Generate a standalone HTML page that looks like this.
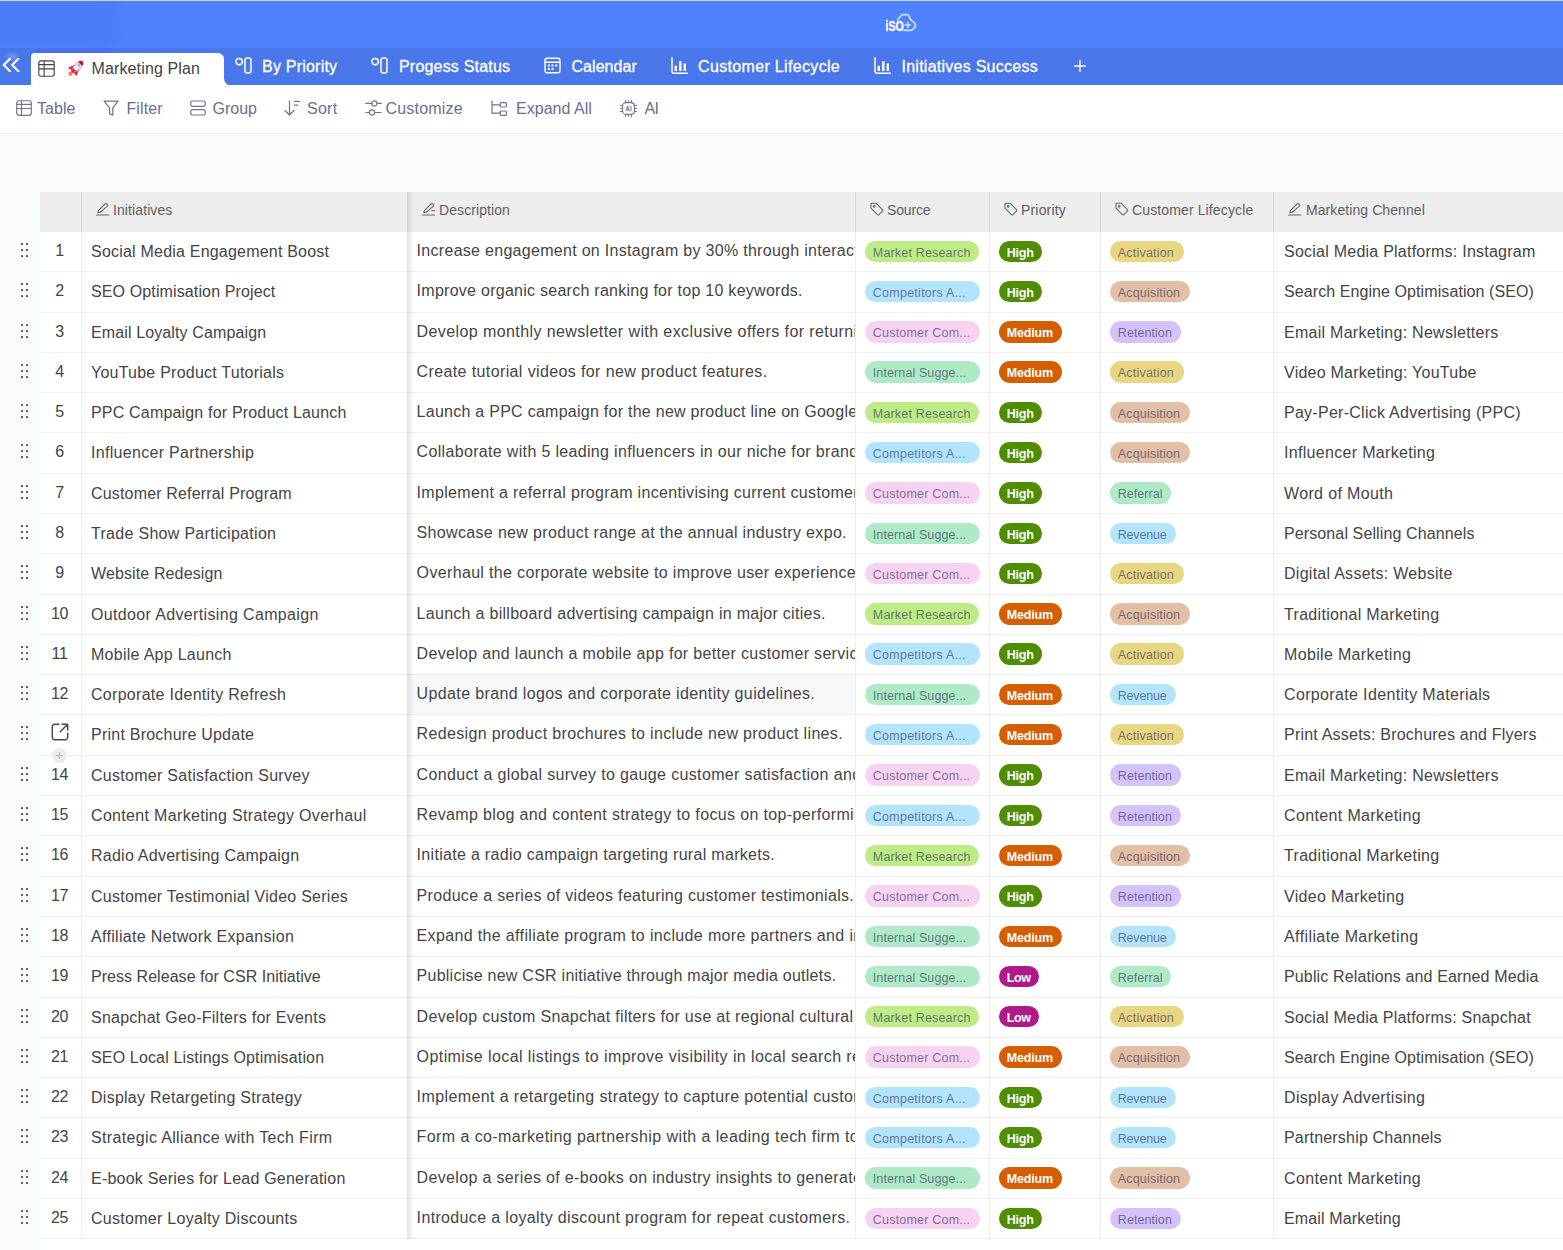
<!DOCTYPE html>
<html lang="en">
<head>
<meta charset="utf-8">
<title>Marketing Plan</title>
<style>
*{box-sizing:border-box;margin:0;padding:0}
html,body{width:1563px;height:1250px;overflow:hidden}
body{position:relative;background:#f9fafc;font-family:"Liberation Sans",sans-serif;font-size:16px;color:#444;-webkit-font-smoothing:antialiased}
svg{display:block;fill:none;stroke:currentColor;stroke-linecap:round;stroke-linejoin:round}
.abs{position:absolute}
/* top bar */
#top{position:absolute;left:0;top:0;width:1563px;height:48px;background:#4f82ff}
#topline{position:absolute;left:0;top:0;width:1563px;height:1px;background:#c9d3ea}
#tabs{position:absolute;left:0;top:48px;width:1563px;height:37.5px;background:#4a77e9}
#atab{position:absolute;left:31px;top:53px;width:193px;height:32.5px;background:#fff;border-radius:3.5px 6px 0 0}
#acurve{position:absolute;left:224px;top:77.5px;width:8px;height:8px;background:radial-gradient(circle at 100% 0,rgba(255,255,255,0) 7.5px,#fff 8.5px)}
.tabtxt{position:absolute;top:56px;height:22px;line-height:22px;color:#fff;font-size:16px;white-space:nowrap;-webkit-text-stroke:.3px #fff}
.tabico{position:absolute;top:57px;width:17px;height:17px;color:#fff}
/* toolbar */
#tool{position:absolute;left:0;top:85px;width:1563px;height:49px;background:#fff;border-bottom:1px solid #eceef2}
.tt{position:absolute;top:98px;height:22px;line-height:22px;color:#697090;font-size:16px;white-space:nowrap}
.ti{position:absolute;top:100.2px;width:16px;height:16px;color:#6d7492}
/* table */
#thead{position:absolute;left:40px;top:192px;width:1523px;height:40px;background:#ededed}
.h{position:absolute;top:0;height:40px;line-height:37px;font-size:14px;color:#606060;white-space:nowrap;border-left:1px solid #d9d9d9}
.h svg{position:absolute;top:10.2px;width:13.6px;height:13.6px;color:#666}
.h span{position:absolute;top:0}
.row{position:absolute;left:0;width:1563px;height:40.29px}
.c{position:absolute;top:0;height:40.29px;line-height:39px;background:#fff;white-space:nowrap;overflow:hidden;border-bottom:1px solid #efefef;border-left:1px solid #efefef}
.num{left:40px;width:41px;padding-right:2px;text-align:center;border-left:none;color:#444;letter-spacing:-.3px;line-height:37.4px}
.ini{left:81px;width:327px;padding-left:9px}
.desc{left:408px;width:448px;padding-left:8.6px;border-left:none;line-height:37.4px}
.desc.hov{background:#f7f8fa}
.src{left:855px;width:135px}
.pri{left:989px;width:112px}
.lc{left:1100px;width:174px}
.ch{left:1273px;width:290px;padding-left:10px}
.tag{position:absolute;left:9px;top:8.6px;height:21.4px;line-height:25.2px;border-radius:11px;font-weight:normal;font-size:12.5px;color:rgba(46,46,86,.64);text-align:left;padding-left:7.8px;white-space:nowrap;overflow:hidden}
.t-mr{background:#bdeb86}.t-ca{background:#b3e4fd}.t-cc{background:#f8d2f3}.t-is{background:#afeac6}
.p-high{background:#4f8d03;color:#fff;font-weight:bold}.p-medium{background:#d55e00;color:#fff;font-weight:bold}.p-low{background:#ae1a8a;color:#fff;font-weight:bold}
.l-activation{background:#e8d682}.l-acquisition{background:#e2bfa5}.l-retention{background:#d4c3fb}.l-referral{background:#afeac6}.l-revenue{background:#b3e4fd}
.grip{position:absolute;left:20.5px;top:11px;width:8px;height:15px}
.grip i{position:absolute;width:2px;height:2px;background:#555;border-radius:.5px}
.grip i:nth-child(1){left:0;top:0}.grip i:nth-child(2){left:5px;top:0}
.grip i:nth-child(3){left:0;top:6px}.grip i:nth-child(4){left:5px;top:6px}
.grip i:nth-child(5){left:0;top:12px}.grip i:nth-child(6){left:5px;top:12px}
.open{position:absolute;left:11.2px;top:8px;width:18px;height:18px;color:#4a4a4a;stroke-width:1.45}
#shadow{position:absolute;left:407px;top:192px;width:7px;height:1047.2px;background:linear-gradient(90deg,rgba(0,0,0,.11),rgba(0,0,0,0))}
#below{position:absolute;left:40px;top:1239.2px;width:1523px;height:11px;background:#fff}
#plus{position:absolute;left:52.1px;top:747.7px;width:15px;height:15px;border-radius:7.5px;background:#ebecf1}
#plus:before,#plus:after{content:"";position:absolute;background:#b6b7cd}
#plus:before{left:4px;top:6.9px;width:7px;height:1.2px}
#plus:after{left:6.9px;top:4px;width:1.2px;height:7px}
</style>
</head>
<body>
<div id="top"></div>
<div id="tabs"></div>
<div class="abs" style="left:-10px;top:-6px;width:134px;height:58px;border-radius:0 30px 30px 0;background:#4677f3;opacity:.38;filter:blur(5px)"></div>
<div class="abs" style="left:36px;top:49.5px;width:76px;height:2.5px;background:#4a50ee;opacity:.5;filter:blur(1.2px)"></div>
<div id="topline"></div>
<div id="atab"></div><div id="acurve"></div>

<!-- logo -->
<svg class="abs" style="left:885px;top:13px;width:32px;height:19px;color:#fff" viewBox="0 0 32 19">
<path d="M12.6 6.8 16 2.7c.5-.7 1.2-1 2-1h3.4c1.4 0 2.4.6 2.9 1.9l1 2.6c.3.7.8 1.2 1.5 1.5l1.6 1.2c1.3 1 2.1 2.1 2.1 3.7 0 1.2-.6 2.2-1.7 3l-1.4 1c-.7.5-1.4.7-2.3.7h-6.6" stroke-width="1.8" stroke-opacity=".72"/>
<path d="M22.8 8.8v6.4M19.6 12h6.4" stroke-width="1.5" stroke-linecap="butt" stroke-opacity=".8"/>
<text x=".6" y="17.7" style="font:bold 15.5px 'Liberation Sans',sans-serif" fill="#fff" stroke="#fff" stroke-width=".45" stroke-opacity=".9" textLength="18.2" lengthAdjust="spacingAndGlyphs">iSO</text>
</svg>

<!-- collapse chevrons -->
<div class="abs" style="left:7px;top:54px;width:10px;height:5px;border-radius:5px;background:#fff;opacity:.3;filter:blur(2px)"></div>
<svg class="abs" style="left:2px;top:57.6px;width:20px;height:14px;color:#fff;stroke-width:2.1" viewBox="0 0 20 14"><path d="M8 .8 1.7 7 8 13.2M16.4 .8 10.1 7l6.3 6.2"/></svg>

<!-- active tab -->
<svg class="abs" style="left:37.8px;top:60px;width:17px;height:17px;color:#454545;stroke-width:1.15" viewBox="0 0 17 17"><rect x=".8" y=".8" width="15.4" height="15.4" rx="2.1"/><path d="M.8 4.6h15.4M.8 8.8h15.4M6.1.8v15.4" stroke-linecap="butt"/></svg>
<svg class="abs" style="left:67.8px;top:60.3px;width:16px;height:16px;overflow:visible" viewBox="0 0 16 16" stroke="none"><g transform="translate(9.3 6.8) rotate(45)">
<circle cx="0" cy="9.7" r="2.1" fill="#f58a3c" stroke="none"/>
<path d="M-3.2.4-6 7.3-1.9 6.6 0 8.2 1.9 6.6 6 7.3 3.2.4z" fill="#e0244d" stroke="none"/>
<ellipse cx="0" cy="-.6" rx="3.3" ry="6.9" fill="#f0f1f3" stroke="#e8859d" stroke-width=".9"/>
<path d="M-2.9-4Q-2.1-6.6 0-7.8 2.1-6.6 2.9-4z" fill="#c8102e" stroke="none"/>
<circle cx="0" cy="-2.3" r="1.550" fill="#8fbfea" stroke="none"/>
<path d="M-2.2 3.2-.9 7.5.9 7.5 2.2 3.2Q0 4.6-2.2 3.2z" fill="#e0244d" stroke="none"/>
</g></svg>
<div class="abs" style="left:91.5px;top:58px;height:22px;line-height:22px;font-size:16px;color:#444;white-space:nowrap;letter-spacing:0.134px" id="mp">Marketing Plan</div>

<!-- other tabs -->
<svg class="tabico" style="left:234.5px" viewBox="0 0 17 17" stroke-width="1.5"><circle cx="4.2" cy="4.6" r="3.2"/><rect x="10" y="1" width="6" height="15" rx="2.2"/></svg>
<div class="tabtxt" style="left:262px;letter-spacing:0.218px" id="t1">By Priority</div>
<svg class="tabico" style="left:371px" viewBox="0 0 17 17" stroke-width="1.5"><circle cx="4.2" cy="4.6" r="3.2"/><rect x="10" y="1" width="6" height="15" rx="2.2"/></svg>
<div class="tabtxt" style="left:399px;letter-spacing:0.193px" id="t2">Progess Status</div>
<svg class="tabico" style="left:544px" viewBox="0 0 17 17" stroke-width="1.4"><rect x="1" y="1.2" width="15" height="14.6" rx="2.2"/><path d="M1 5.2h15"/><path d="M3.8 8.5h2M7.5 8.5h2M11.2 8.5h2M3.8 12h2M7.5 12h2" stroke-width="2.1" stroke-linecap="butt"/></svg>
<div class="tabtxt" style="left:571.5px;letter-spacing:0.045px" id="t3">Calendar</div>
<svg class="tabico" style="left:671px" viewBox="0 0 17 17" stroke-width="1.5"><path d="M1 .8v13.4a2 2 0 0 0 2 2h13.3"/><path d="M4.8 8.8v5.2M9.3 4.2v9.8M13.8 6.6v7.4" stroke-width="2.4" stroke-linecap="butt"/></svg>
<div class="tabtxt" style="left:698px;letter-spacing:0.336px" id="t4">Customer Lifecycle</div>
<svg class="tabico" style="left:874px" viewBox="0 0 17 17" stroke-width="1.5"><path d="M1 .8v13.4a2 2 0 0 0 2 2h13.3"/><path d="M4.8 8.8v5.2M9.3 4.2v9.8M13.8 6.6v7.4" stroke-width="2.4" stroke-linecap="butt"/></svg>
<div class="tabtxt" style="left:901.5px;letter-spacing:0.252px" id="t5">Initiatives Success</div>
<svg class="abs" style="left:1074px;top:60px;width:12px;height:12px;color:#fff;stroke-width:1.4" viewBox="0 0 12 12"><path d="M6 .5v11M.5 6h11"/></svg>

<!-- toolbar -->
<div id="tool"></div>
<svg class="ti" style="left:16px" viewBox="0 0 16 16" stroke-width="1.15"><rect x=".7" y=".7" width="14.6" height="14.6" rx="2.4"/><path d="M.7 4.4h14.6M.7 8.5h14.6M5.5 .7v14.6" stroke-linecap="butt"/></svg>
<div class="tt" style="left:37px;letter-spacing:0.03px" id="b1">Table</div>
<svg class="ti" style="left:103px" viewBox="0 0 16 16" stroke-width="1.2"><path d="M1 1.2h14l-5.2 6.6v7.4l-3.2-1.6V7.8z"/></svg>
<div class="tt" style="left:126.5px;letter-spacing:0.09px" id="b2">Filter</div>
<svg class="ti" style="left:189.5px" viewBox="0 0 16 16" stroke-width="1.2"><rect x=".8" y="1" width="14.4" height="5.4" rx="1.6"/><rect x=".8" y="9.6" width="14.4" height="5.4" rx="1.6"/></svg>
<div class="tt" style="left:212.5px" id="b3">Group</div>
<svg class="ti" style="left:284px" viewBox="0 0 16 16" stroke-width="1.2"><path d="M5.5 .8v14M1 10.5l4.5 4.5 4.5-4.5M10.5 1.4h5M10.5 5.2h3"/></svg>
<div class="tt" style="left:307px;letter-spacing:0.264px" id="b4">Sort</div>
<svg class="ti" style="left:364.5px;width:17px" viewBox="0 0 17 16" stroke-width="1.2"><path d="M.8 3.4h6M12 3.4h4.2M.8 12.5h3.6M9.6 12.5h6.6"/><circle cx="9.4" cy="3.4" r="2.6"/><circle cx="7" cy="12.5" r="2.6"/></svg>
<div class="tt" style="left:385.5px;letter-spacing:0.202px" id="b5">Customize</div>
<svg class="ti" style="left:490.5px" viewBox="0 0 16 16" stroke-width="1.2"><path d="M1 .8v12.4h8.2M1 4.8h8.2"/><rect x="9.2" y="2.7" width="6.2" height="4.3" rx=".9"/><rect x="9.2" y="11" width="6.2" height="4.3" rx=".9"/></svg>
<div class="tt" style="left:516px;letter-spacing:0.019px" id="b6">Expand All</div>
<svg class="ti" style="left:619.5px;width:17px;height:17px;top:99.5px" viewBox="0 0 17 17" stroke-width="1.1"><rect x="2.6" y="2.6" width="11.8" height="11.8" rx="3.4"/><path d="M5.5.5v2M8.5.5v2M11.5.5v2M5.5 14.5v2M8.5 14.5v2M11.5 14.5v2M.5 5.5h2M.5 8.5h2M.5 11.5h2M14.5 5.5h2M14.5 8.5h2M14.5 11.5h2" stroke-width="1"/><text x="8.5" y="10.9" style="font:bold 6.5px 'Liberation Sans',sans-serif" text-anchor="middle" fill="currentColor" stroke="none">AI</text></svg>
<div class="tt" style="left:644.5px;letter-spacing:-0.662px" id="b7">AI</div>

<!-- table header -->
<div id="thead">
<div class="h" style="left:0;width:41px;border-left:none"></div>
<div class="h" style="left:41px;width:327px"><svg style="left:14px" viewBox="0 0 14 14" stroke-width="1.1"><path d="M.6 13.4h12.8M2.2 9.2 9.4 2a1.2 1.2 0 0 1 1.7 0l.6.6a1.2 1.2 0 0 1 0 1.7L4.5 10.4l-2.6.4z"/></svg><span style="left:31px;letter-spacing:0.095px" id="h1">Initiatives</span></div>
<div class="h" style="left:368px;width:448px;border-left:none"><svg style="left:13.5px" viewBox="0 0 14 14" stroke-width="1.1"><path d="M.6 13.4h12.8M2.2 9.2 9.4 2a1.2 1.2 0 0 1 1.7 0l.6.6a1.2 1.2 0 0 1 0 1.7L4.5 10.4l-2.6.4zM10 9h3"/></svg><span style="left:31px;letter-spacing:0.088px" id="h2">Description</span></div>
<div class="h" style="left:815px;width:135px"><svg style="left:14px" viewBox="0 0 14 14" stroke-width="1.1"><path d="M1 1.8v4.6l6.6 6.6a1.2 1.2 0 0 0 1.7 0l3.5-3.5a1.2 1.2 0 0 0 0-1.7L6.2 1.2H1.6a.6.6 0 0 0-.6.6z"/><circle cx="4.3" cy="4.5" r=".9"/></svg><span style="left:31px;letter-spacing:-0.143px" id="h3">Source</span></div>
<div class="h" style="left:949px;width:112px"><svg style="left:14px" viewBox="0 0 14 14" stroke-width="1.1"><path d="M1 1.8v4.6l6.6 6.6a1.2 1.2 0 0 0 1.7 0l3.5-3.5a1.2 1.2 0 0 0 0-1.7L6.2 1.2H1.6a.6.6 0 0 0-.6.6z"/><circle cx="4.3" cy="4.5" r=".9"/></svg><span style="left:31px;letter-spacing:0.18px" id="h4">Priority</span></div>
<div class="h" style="left:1060px;width:174px"><svg style="left:14px" viewBox="0 0 14 14" stroke-width="1.1"><path d="M1 1.8v4.6l6.6 6.6a1.2 1.2 0 0 0 1.7 0l3.5-3.5a1.2 1.2 0 0 0 0-1.7L6.2 1.2H1.6a.6.6 0 0 0-.6.6z"/><circle cx="4.3" cy="4.5" r=".9"/></svg><span style="left:31px;letter-spacing:0.125px" id="h5">Customer Lifecycle</span></div>
<div class="h" style="left:1233px;width:290px"><svg style="left:14px" viewBox="0 0 14 14" stroke-width="1.1"><path d="M.6 13.4h12.8M2.2 9.2 9.4 2a1.2 1.2 0 0 1 1.7 0l.6.6a1.2 1.2 0 0 1 0 1.7L4.5 10.4l-2.6.4z"/></svg><span style="left:32px;letter-spacing:0.081px" id="h6">Marketing Chennel</span></div>
</div>
<div id="below"></div>

<div class="row" style="top:232.00px">
<div class="grip"><i></i><i></i><i></i><i></i><i></i><i></i></div>
<div class="c num">1</div>
<div class="c ini"><span id="i1" style="letter-spacing:0.209px">Social Media Engagement Boost</span></div>
<div class="c desc"><span id="d1" style="letter-spacing:0.293px">Increase engagement on Instagram by 30% through interactive content and stories.</span></div>
<div class="c src"><b class="tag t-mr" style="width:113.5px;letter-spacing:0.175px">Market Research</b></div>
<div class="c pri"><b class="tag p-high" style="width:43px;letter-spacing:-0.218px">High</b></div>
<div class="c lc"><b class="tag l-activation" style="width:74px;letter-spacing:0.201px">Activation</b></div>
<div class="c ch"><span id="c1" style="letter-spacing:0.238px">Social Media Platforms: Instagram</span></div>
</div>
<div class="row" style="top:272.29px">
<div class="grip"><i></i><i></i><i></i><i></i><i></i><i></i></div>
<div class="c num">2</div>
<div class="c ini"><span id="i2" style="letter-spacing:0.125px">SEO Optimisation Project</span></div>
<div class="c desc"><span id="d2" style="letter-spacing:0.266px">Improve organic search ranking for top 10 keywords.</span></div>
<div class="c src"><b class="tag t-ca" style="width:115px;letter-spacing:0.256px">Competitors A...</b></div>
<div class="c pri"><b class="tag p-high" style="width:43px;letter-spacing:-0.218px">High</b></div>
<div class="c lc"><b class="tag l-acquisition" style="width:80px;letter-spacing:0.177px">Acquisition</b></div>
<div class="c ch"><span id="c2" style="letter-spacing:0.084px">Search Engine Optimisation (SEO)</span></div>
</div>
<div class="row" style="top:312.58px">
<div class="grip"><i></i><i></i><i></i><i></i><i></i><i></i></div>
<div class="c num">3</div>
<div class="c ini"><span id="i3" style="letter-spacing:0.121px">Email Loyalty Campaign</span></div>
<div class="c desc"><span id="d3" style="letter-spacing:0.402px">Develop monthly newsletter with exclusive offers for returning customers.</span></div>
<div class="c src"><b class="tag t-cc" style="width:115px;letter-spacing:0.202px">Customer Com...</b></div>
<div class="c pri"><b class="tag p-medium" style="width:62.5px;letter-spacing:-0.187px">Medium</b></div>
<div class="c lc"><b class="tag l-retention" style="width:71px;letter-spacing:0.066px">Retention</b></div>
<div class="c ch"><span id="c3" style="letter-spacing:0.265px">Email Marketing: Newsletters</span></div>
</div>
<div class="row" style="top:352.87px">
<div class="grip"><i></i><i></i><i></i><i></i><i></i><i></i></div>
<div class="c num">4</div>
<div class="c ini"><span id="i4" style="letter-spacing:0.233px">YouTube Product Tutorials</span></div>
<div class="c desc"><span id="d4" style="letter-spacing:0.381px">Create tutorial videos for new product features.</span></div>
<div class="c src"><b class="tag t-is" style="width:115px;letter-spacing:0.104px">Internal Sugge...</b></div>
<div class="c pri"><b class="tag p-medium" style="width:62.5px;letter-spacing:-0.187px">Medium</b></div>
<div class="c lc"><b class="tag l-activation" style="width:74px;letter-spacing:0.201px">Activation</b></div>
<div class="c ch"><span id="c4" style="letter-spacing:0.245px">Video Marketing: YouTube</span></div>
</div>
<div class="row" style="top:393.16px">
<div class="grip"><i></i><i></i><i></i><i></i><i></i><i></i></div>
<div class="c num">5</div>
<div class="c ini"><span id="i5" style="letter-spacing:0.18px">PPC Campaign for Product Launch</span></div>
<div class="c desc"><span id="d5" style="letter-spacing:0.263px">Launch a PPC campaign for the new product line on Google Ads and Bing.</span></div>
<div class="c src"><b class="tag t-mr" style="width:113.5px;letter-spacing:0.175px">Market Research</b></div>
<div class="c pri"><b class="tag p-high" style="width:43px;letter-spacing:-0.218px">High</b></div>
<div class="c lc"><b class="tag l-acquisition" style="width:80px;letter-spacing:0.177px">Acquisition</b></div>
<div class="c ch"><span id="c5" style="letter-spacing:0.268px">Pay-Per-Click Advertising (PPC)</span></div>
</div>
<div class="row" style="top:433.45px">
<div class="grip"><i></i><i></i><i></i><i></i><i></i><i></i></div>
<div class="c num">6</div>
<div class="c ini"><span id="i6" style="letter-spacing:0.303px">Influencer Partnership</span></div>
<div class="c desc"><span id="d6" style="letter-spacing:0.331px">Collaborate with 5 leading influencers in our niche for brand promotion.</span></div>
<div class="c src"><b class="tag t-ca" style="width:115px;letter-spacing:0.256px">Competitors A...</b></div>
<div class="c pri"><b class="tag p-high" style="width:43px;letter-spacing:-0.218px">High</b></div>
<div class="c lc"><b class="tag l-acquisition" style="width:80px;letter-spacing:0.177px">Acquisition</b></div>
<div class="c ch"><span id="c6" style="letter-spacing:0.317px">Influencer Marketing</span></div>
</div>
<div class="row" style="top:473.74px">
<div class="grip"><i></i><i></i><i></i><i></i><i></i><i></i></div>
<div class="c num">7</div>
<div class="c ini"><span id="i7" style="letter-spacing:0.168px">Customer Referral Program</span></div>
<div class="c desc"><span id="d7" style="letter-spacing:0.323px">Implement a referral program incentivising current customers to refer.</span></div>
<div class="c src"><b class="tag t-cc" style="width:115px;letter-spacing:0.202px">Customer Com...</b></div>
<div class="c pri"><b class="tag p-high" style="width:43px;letter-spacing:-0.218px">High</b></div>
<div class="c lc"><b class="tag l-referral" style="width:61.4px;letter-spacing:0.03px">Referral</b></div>
<div class="c ch"><span id="c7" style="letter-spacing:0.351px">Word of Mouth</span></div>
</div>
<div class="row" style="top:514.03px">
<div class="grip"><i></i><i></i><i></i><i></i><i></i><i></i></div>
<div class="c num">8</div>
<div class="c ini"><span id="i8" style="letter-spacing:0.297px">Trade Show Participation</span></div>
<div class="c desc"><span id="d8" style="letter-spacing:0.336px">Showcase new product range at the annual industry expo.</span></div>
<div class="c src"><b class="tag t-is" style="width:115px;letter-spacing:0.104px">Internal Sugge...</b></div>
<div class="c pri"><b class="tag p-high" style="width:43px;letter-spacing:-0.218px">High</b></div>
<div class="c lc"><b class="tag l-revenue" style="width:66px;letter-spacing:-0.205px">Revenue</b></div>
<div class="c ch"><span id="c8" style="letter-spacing:0.113px">Personal Selling Channels</span></div>
</div>
<div class="row" style="top:554.32px">
<div class="grip"><i></i><i></i><i></i><i></i><i></i><i></i></div>
<div class="c num">9</div>
<div class="c ini"><span id="i9" style="letter-spacing:0.121px">Website Redesign</span></div>
<div class="c desc"><span id="d9" style="letter-spacing:0.344px">Overhaul the corporate website to improve user experience and speed.</span></div>
<div class="c src"><b class="tag t-cc" style="width:115px;letter-spacing:0.202px">Customer Com...</b></div>
<div class="c pri"><b class="tag p-high" style="width:43px;letter-spacing:-0.218px">High</b></div>
<div class="c lc"><b class="tag l-activation" style="width:74px;letter-spacing:0.201px">Activation</b></div>
<div class="c ch"><span id="c9" style="letter-spacing:0.268px">Digital Assets: Website</span></div>
</div>
<div class="row" style="top:594.61px">
<div class="grip"><i></i><i></i><i></i><i></i><i></i><i></i></div>
<div class="c num">10</div>
<div class="c ini"><span id="i10" style="letter-spacing:0.353px">Outdoor Advertising Campaign</span></div>
<div class="c desc"><span id="d10" style="letter-spacing:0.286px">Launch a billboard advertising campaign in major cities.</span></div>
<div class="c src"><b class="tag t-mr" style="width:113.5px;letter-spacing:0.175px">Market Research</b></div>
<div class="c pri"><b class="tag p-medium" style="width:62.5px;letter-spacing:-0.187px">Medium</b></div>
<div class="c lc"><b class="tag l-acquisition" style="width:80px;letter-spacing:0.177px">Acquisition</b></div>
<div class="c ch"><span id="c10" style="letter-spacing:0.318px">Traditional Marketing</span></div>
</div>
<div class="row" style="top:634.90px">
<div class="grip"><i></i><i></i><i></i><i></i><i></i><i></i></div>
<div class="c num">11</div>
<div class="c ini"><span id="i11" style="letter-spacing:0.276px">Mobile App Launch</span></div>
<div class="c desc"><span id="d11" style="letter-spacing:0.323px">Develop and launch a mobile app for better customer service.</span></div>
<div class="c src"><b class="tag t-ca" style="width:115px;letter-spacing:0.256px">Competitors A...</b></div>
<div class="c pri"><b class="tag p-high" style="width:43px;letter-spacing:-0.218px">High</b></div>
<div class="c lc"><b class="tag l-activation" style="width:74px;letter-spacing:0.201px">Activation</b></div>
<div class="c ch"><span id="c11" style="letter-spacing:0.336px">Mobile Marketing</span></div>
</div>
<div class="row" style="top:675.19px">
<div class="grip"><i></i><i></i><i></i><i></i><i></i><i></i></div>
<div class="c num">12</div>
<div class="c ini"><span id="i12" style="letter-spacing:0.294px">Corporate Identity Refresh</span></div>
<div class="c desc hov"><span id="d12" style="letter-spacing:0.371px">Update brand logos and corporate identity guidelines.</span></div>
<div class="c src"><b class="tag t-is" style="width:115px;letter-spacing:0.104px">Internal Sugge...</b></div>
<div class="c pri"><b class="tag p-medium" style="width:62.5px;letter-spacing:-0.187px">Medium</b></div>
<div class="c lc"><b class="tag l-revenue" style="width:66px;letter-spacing:-0.205px">Revenue</b></div>
<div class="c ch"><span id="c12" style="letter-spacing:0.352px">Corporate Identity Materials</span></div>
</div>
<div class="row" style="top:715.48px">
<div class="grip"><i></i><i></i><i></i><i></i><i></i><i></i></div>
<div class="c num"><svg class="open" viewBox="0 0 18 18"><path d="M8 1.3H3.8a2.5 2.5 0 0 0-2.5 2.5v10.4a2.5 2.5 0 0 0 2.5 2.5h10.4a2.5 2.5 0 0 0 2.5-2.5V10.3"/><path d="M11 1.3h5.7V7M16.5 1.5 9.2 8.800"/></svg></div>
<div class="c ini"><span id="i13" style="letter-spacing:0.233px">Print Brochure Update</span></div>
<div class="c desc"><span id="d13" style="letter-spacing:0.34px">Redesign product brochures to include new product lines.</span></div>
<div class="c src"><b class="tag t-ca" style="width:115px;letter-spacing:0.256px">Competitors A...</b></div>
<div class="c pri"><b class="tag p-medium" style="width:62.5px;letter-spacing:-0.187px">Medium</b></div>
<div class="c lc"><b class="tag l-activation" style="width:74px;letter-spacing:0.201px">Activation</b></div>
<div class="c ch"><span id="c13" style="letter-spacing:0.211px">Print Assets: Brochures and Flyers</span></div>
</div>
<div class="row" style="top:755.77px">
<div class="grip"><i></i><i></i><i></i><i></i><i></i><i></i></div>
<div class="c num">14</div>
<div class="c ini"><span id="i14" style="letter-spacing:0.284px">Customer Satisfaction Survey</span></div>
<div class="c desc"><span id="d14" style="letter-spacing:0.355px">Conduct a global survey to gauge customer satisfaction and needs.</span></div>
<div class="c src"><b class="tag t-cc" style="width:115px;letter-spacing:0.202px">Customer Com...</b></div>
<div class="c pri"><b class="tag p-high" style="width:43px;letter-spacing:-0.218px">High</b></div>
<div class="c lc"><b class="tag l-retention" style="width:71px;letter-spacing:0.066px">Retention</b></div>
<div class="c ch"><span id="c14" style="letter-spacing:0.269px">Email Marketing: Newsletters</span></div>
</div>
<div class="row" style="top:796.06px">
<div class="grip"><i></i><i></i><i></i><i></i><i></i><i></i></div>
<div class="c num">15</div>
<div class="c ini"><span id="i15" style="letter-spacing:0.327px">Content Marketing Strategy Overhaul</span></div>
<div class="c desc"><span id="d15" style="letter-spacing:0.356px">Revamp blog and content strategy to focus on top-performing topics.</span></div>
<div class="c src"><b class="tag t-ca" style="width:115px;letter-spacing:0.256px">Competitors A...</b></div>
<div class="c pri"><b class="tag p-high" style="width:43px;letter-spacing:-0.218px">High</b></div>
<div class="c lc"><b class="tag l-retention" style="width:71px;letter-spacing:0.066px">Retention</b></div>
<div class="c ch"><span id="c15" style="letter-spacing:0.363px">Content Marketing</span></div>
</div>
<div class="row" style="top:836.35px">
<div class="grip"><i></i><i></i><i></i><i></i><i></i><i></i></div>
<div class="c num">16</div>
<div class="c ini"><span id="i16" style="letter-spacing:0.25px">Radio Advertising Campaign</span></div>
<div class="c desc"><span id="d16" style="letter-spacing:0.304px">Initiate a radio campaign targeting rural markets.</span></div>
<div class="c src"><b class="tag t-mr" style="width:113.5px;letter-spacing:0.175px">Market Research</b></div>
<div class="c pri"><b class="tag p-medium" style="width:62.5px;letter-spacing:-0.187px">Medium</b></div>
<div class="c lc"><b class="tag l-acquisition" style="width:80px;letter-spacing:0.177px">Acquisition</b></div>
<div class="c ch"><span id="c16" style="letter-spacing:0.318px">Traditional Marketing</span></div>
</div>
<div class="row" style="top:876.64px">
<div class="grip"><i></i><i></i><i></i><i></i><i></i><i></i></div>
<div class="c num">17</div>
<div class="c ini"><span id="i17" style="letter-spacing:0.263px">Customer Testimonial Video Series</span></div>
<div class="c desc"><span id="d17" style="letter-spacing:0.316px">Produce a series of videos featuring customer testimonials.</span></div>
<div class="c src"><b class="tag t-cc" style="width:115px;letter-spacing:0.202px">Customer Com...</b></div>
<div class="c pri"><b class="tag p-high" style="width:43px;letter-spacing:-0.218px">High</b></div>
<div class="c lc"><b class="tag l-retention" style="width:71px;letter-spacing:0.066px">Retention</b></div>
<div class="c ch"><span id="c17" style="letter-spacing:0.338px">Video Marketing</span></div>
</div>
<div class="row" style="top:916.93px">
<div class="grip"><i></i><i></i><i></i><i></i><i></i><i></i></div>
<div class="c num">18</div>
<div class="c ini"><span id="i18" style="letter-spacing:0.32px">Affiliate Network Expansion</span></div>
<div class="c desc"><span id="d18" style="letter-spacing:0.352px">Expand the affiliate program to include more partners and increase reach.</span></div>
<div class="c src"><b class="tag t-is" style="width:115px;letter-spacing:0.104px">Internal Sugge...</b></div>
<div class="c pri"><b class="tag p-medium" style="width:62.5px;letter-spacing:-0.187px">Medium</b></div>
<div class="c lc"><b class="tag l-revenue" style="width:66px;letter-spacing:-0.205px">Revenue</b></div>
<div class="c ch"><span id="c18" style="letter-spacing:0.401px">Affiliate Marketing</span></div>
</div>
<div class="row" style="top:957.22px">
<div class="grip"><i></i><i></i><i></i><i></i><i></i><i></i></div>
<div class="c num">19</div>
<div class="c ini"><span id="i19" style="letter-spacing:0.04px">Press Release for CSR Initiative</span></div>
<div class="c desc"><span id="d19" style="letter-spacing:0.25px">Publicise new CSR initiative through major media outlets.</span></div>
<div class="c src"><b class="tag t-is" style="width:115px;letter-spacing:0.104px">Internal Sugge...</b></div>
<div class="c pri"><b class="tag p-low" style="width:40px;letter-spacing:-0.431px">Low</b></div>
<div class="c lc"><b class="tag l-referral" style="width:61.4px;letter-spacing:0.03px">Referral</b></div>
<div class="c ch"><span id="c19" style="letter-spacing:0.138px">Public Relations and Earned Media</span></div>
</div>
<div class="row" style="top:997.51px">
<div class="grip"><i></i><i></i><i></i><i></i><i></i><i></i></div>
<div class="c num">20</div>
<div class="c ini"><span id="i20" style="letter-spacing:0.243px">Snapchat Geo-Filters for Events</span></div>
<div class="c desc"><span id="d20" style="letter-spacing:0.313px">Develop custom Snapchat filters for use at regional cultural events.</span></div>
<div class="c src"><b class="tag t-mr" style="width:113.5px;letter-spacing:0.175px">Market Research</b></div>
<div class="c pri"><b class="tag p-low" style="width:40px;letter-spacing:-0.431px">Low</b></div>
<div class="c lc"><b class="tag l-activation" style="width:74px;letter-spacing:0.201px">Activation</b></div>
<div class="c ch"><span id="c20" style="letter-spacing:0.209px">Social Media Platforms: Snapchat</span></div>
</div>
<div class="row" style="top:1037.80px">
<div class="grip"><i></i><i></i><i></i><i></i><i></i><i></i></div>
<div class="c num">21</div>
<div class="c ini"><span id="i21" style="letter-spacing:0.15px">SEO Local Listings Optimisation</span></div>
<div class="c desc"><span id="d21" style="letter-spacing:0.42px">Optimise local listings to improve visibility in local search results.</span></div>
<div class="c src"><b class="tag t-cc" style="width:115px;letter-spacing:0.202px">Customer Com...</b></div>
<div class="c pri"><b class="tag p-medium" style="width:62.5px;letter-spacing:-0.187px">Medium</b></div>
<div class="c lc"><b class="tag l-acquisition" style="width:80px;letter-spacing:0.177px">Acquisition</b></div>
<div class="c ch"><span id="c21" style="letter-spacing:0.084px">Search Engine Optimisation (SEO)</span></div>
</div>
<div class="row" style="top:1078.09px">
<div class="grip"><i></i><i></i><i></i><i></i><i></i><i></i></div>
<div class="c num">22</div>
<div class="c ini"><span id="i22" style="letter-spacing:0.259px">Display Retargeting Strategy</span></div>
<div class="c desc"><span id="d22" style="letter-spacing:0.393px">Implement a retargeting strategy to capture potential customers.</span></div>
<div class="c src"><b class="tag t-ca" style="width:115px;letter-spacing:0.256px">Competitors A...</b></div>
<div class="c pri"><b class="tag p-high" style="width:43px;letter-spacing:-0.218px">High</b></div>
<div class="c lc"><b class="tag l-revenue" style="width:66px;letter-spacing:-0.205px">Revenue</b></div>
<div class="c ch"><span id="c22" style="letter-spacing:0.323px">Display Advertising</span></div>
</div>
<div class="row" style="top:1118.38px">
<div class="grip"><i></i><i></i><i></i><i></i><i></i><i></i></div>
<div class="c num">23</div>
<div class="c ini"><span id="i23" style="letter-spacing:0.348px">Strategic Alliance with Tech Firm</span></div>
<div class="c desc"><span id="d23" style="letter-spacing:0.417px">Form a co-marketing partnership with a leading tech firm to expand.</span></div>
<div class="c src"><b class="tag t-ca" style="width:115px;letter-spacing:0.256px">Competitors A...</b></div>
<div class="c pri"><b class="tag p-high" style="width:43px;letter-spacing:-0.218px">High</b></div>
<div class="c lc"><b class="tag l-revenue" style="width:66px;letter-spacing:-0.205px">Revenue</b></div>
<div class="c ch"><span id="c23" style="letter-spacing:0.196px">Partnership Channels</span></div>
</div>
<div class="row" style="top:1158.67px">
<div class="grip"><i></i><i></i><i></i><i></i><i></i><i></i></div>
<div class="c num">24</div>
<div class="c ini"><span id="i24" style="letter-spacing:0.222px">E-book Series for Lead Generation</span></div>
<div class="c desc"><span id="d24" style="letter-spacing:0.341px">Develop a series of e-books on industry insights to generate leads.</span></div>
<div class="c src"><b class="tag t-is" style="width:115px;letter-spacing:0.104px">Internal Sugge...</b></div>
<div class="c pri"><b class="tag p-medium" style="width:62.5px;letter-spacing:-0.187px">Medium</b></div>
<div class="c lc"><b class="tag l-acquisition" style="width:80px;letter-spacing:0.177px">Acquisition</b></div>
<div class="c ch"><span id="c24" style="letter-spacing:0.363px">Content Marketing</span></div>
</div>
<div class="row" style="top:1198.96px">
<div class="grip"><i></i><i></i><i></i><i></i><i></i><i></i></div>
<div class="c num">25</div>
<div class="c ini"><span id="i25" style="letter-spacing:0.281px">Customer Loyalty Discounts</span></div>
<div class="c desc"><span id="d25" style="letter-spacing:0.349px">Introduce a loyalty discount program for repeat customers.</span></div>
<div class="c src"><b class="tag t-cc" style="width:115px;letter-spacing:0.202px">Customer Com...</b></div>
<div class="c pri"><b class="tag p-high" style="width:43px;letter-spacing:-0.218px">High</b></div>
<div class="c lc"><b class="tag l-retention" style="width:71px;letter-spacing:0.066px">Retention</b></div>
<div class="c ch"><span id="c25" style="letter-spacing:0.146px">Email Marketing</span></div>
</div>
<div id="shadow"></div>
<div id="plus"></div>
</body>
</html>
